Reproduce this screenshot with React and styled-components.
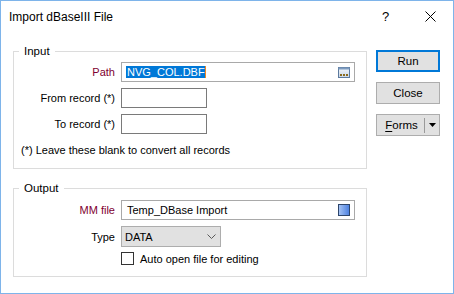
import styled, { createGlobalStyle } from "styled-components";

const GlobalStyle = createGlobalStyle`
  html, body {
    margin: 0;
    padding: 0;
    background: #fff;
  }
  body {
    font-family: "Liberation Sans", Arial, sans-serif;
    font-size: 11px;
    color: #000;
  }
`;

const Window = styled.div`
  box-sizing: border-box;
  width: 454px;
  height: 294px;
  border: 1px solid #7eb4ea;
  background: #fff;
  display: flex;
  flex-direction: column;
`;

const TitleBar = styled.div`
  height: 31px;
  display: flex;
  align-items: center;
  padding-left: 8px;
`;

const Title = styled.div`
  flex: 1;
  font-size: 12px;
  line-height: 16px;
`;

const CaptionButton = styled.div`
  width: 45px;
  height: 31px;
  display: flex;
  align-items: center;
  justify-content: center;
  font-size: 13px;
`;

const Body = styled.div`
  display: flex;
  gap: 9px;
  padding-left: 12px;
`;

const Groups = styled.div`
  width: 354px;
  padding-top: 19px;
  display: flex;
  flex-direction: column;
  gap: 19px;
`;

const Group = styled.div`
  position: relative;
  border: 1px solid #dcdcdc;
  padding: ${(p) => p.$pad};
`;

const GroupTitle = styled.span`
  position: absolute;
  top: -9px;
  left: 5px;
  padding: 0 5px;
  background: #fff;
  font-size: 11.5px;
  line-height: 16px;
`;

const Form = styled.div`
  display: grid;
  grid-template-columns: 101px auto;
  column-gap: 6px;
  row-gap: 6px;
  align-items: center;
  justify-items: start;
  margin-top: ${(p) => p.$top || 0}px;
`;

const Label = styled.label`
  justify-self: end;
  line-height: 16px;
  color: ${(p) => (p.$required ? "#800030" : "#000")};
`;

const Field = styled.div`
  box-sizing: border-box;
  width: ${(p) => p.$width}px;
  height: ${(p) => p.$height || 20}px;
  border: 1px solid ${(p) => (p.$combo ? "#adadad" : p.$light ? "#a9a9a9" : "#7a7a7a")};
  background: ${(p) => (p.$combo ? "#e1e1e1" : "#fff")};
  display: flex;
  align-items: center;
  padding: 0 4px 0 ${(p) => p.$padLeft || 5}px;
  line-height: 16px;
`;

const Value = styled.span`
  flex: 1;
  white-space: nowrap;
`;

const Selected = styled.span`
  background: #0078d7;
  color: #fff;
  line-height: 12px;
  padding: 0 0 0 1px;
  border-right: 1px solid #f08a24;
`;

const Note = styled.div`
  margin-top: 8px;
  padding-left: 7px;
  line-height: 16px;
`;

const CheckRow = styled.label`
  grid-column: 2;
  display: flex;
  align-items: center;
  gap: 6px;
  height: 13px;
`;

const CheckBox = styled.span`
  box-sizing: border-box;
  width: 13px;
  height: 13px;
  border: 1px solid #333;
  background: #fff;
`;

const Buttons = styled.div`
  padding-top: 18px;
  display: flex;
  flex-direction: column;
  gap: 10px;
`;

const Button = styled.button`
  box-sizing: border-box;
  width: 64px;
  height: 22px;
  padding: 0;
  font-family: inherit;
  font-size: 11.5px;
  color: #000;
  background: #e1e1e1;
  border: ${(p) => (p.$default ? "2px solid #0078d7" : "1px solid #adadad")};
  display: flex;
  align-items: center;
  justify-content: center;
`;

const SplitLabel = styled.span`
  width: 45px;
  text-align: center;
  padding-left: 2px;
`;

const SplitDivider = styled.span`
  width: 1px;
  height: 15px;
  background: #9a9a9a;
`;

const SplitArrow = styled.span`
  flex: 1;
  display: flex;
  justify-content: center;
`;

const Underline = styled.span`
  text-decoration: underline;
  text-underline-offset: 2px;
`;

const BrowseIcon = () => (
  <svg width="12" height="11" viewBox="0 0 12 11">
    <defs>
      <linearGradient id="bg" x1="0" y1="0" x2="0" y2="1">
        <stop offset="0" stopColor="#f4f7fb" />
        <stop offset="1" stopColor="#c9d6e6" />
      </linearGradient>
    </defs>
    <rect x="0.5" y="0.5" width="11" height="10" fill="url(#bg)" stroke="#5c7a9e" />
    <rect x="0.5" y="0.5" width="11" height="2" fill="#7d9bc0" />
    <rect x="2" y="7" width="2" height="2" fill="#8a6a1c" />
    <rect x="5" y="7" width="2" height="2" fill="#8a6a1c" />
    <rect x="8" y="7" width="2" height="2" fill="#8a6a1c" />
  </svg>
);

const FileIcon = () => (
  <svg width="12" height="12" viewBox="0 0 12 12">
    <defs>
      <linearGradient id="fg" x1="0" y1="0" x2="1" y2="0">
        <stop offset="0" stopColor="#a9c6f5" />
        <stop offset="1" stopColor="#4a7fe0" />
      </linearGradient>
    </defs>
    <rect x="0.5" y="0.5" width="11" height="11" fill="url(#fg)" stroke="#2e466b" />
  </svg>
);

const Chevron = () => (
  <svg width="9" height="5" viewBox="0 0 9 5">
    <path d="M0.5 0.5 L4.5 4.5 L8.5 0.5" fill="none" stroke="#5a5a5a" />
  </svg>
);

const DropArrow = () => (
  <svg width="7" height="4" viewBox="0 0 7 4">
    <path d="M0 0 H7 L3.5 4 Z" fill="#000" />
  </svg>
);

const CloseGlyph = () => (
  <svg width="11" height="11" viewBox="0 0 11 11">
    <path d="M0.5 0.5 L10.5 10.5 M10.5 0.5 L0.5 10.5" stroke="#000" strokeWidth="1" />
  </svg>
);

export default function App() {
  return (
    <>
      <GlobalStyle />
      <Window>
        <TitleBar>
          <Title>Import dBaseIII File</Title>
          <CaptionButton>?</CaptionButton>
          <CaptionButton>
            <CloseGlyph />
          </CaptionButton>
        </TitleBar>
        <Body>
          <Groups>
            <Group $pad="10px 11px 10px 0">
              <GroupTitle>Input</GroupTitle>
              <Form>
                <Label $required>Path</Label>
                <Field $width={234} $light $padLeft={4}>
                  <Value>
                    <Selected>NVG_COL.DBF</Selected>
                  </Value>
                  <BrowseIcon />
                </Field>
                <Label>From record (*)</Label>
                <Field $width={86} />
                <Label>To record (*)</Label>
                <Field $width={86} />
              </Form>
              <Note>(*) Leave these blank to convert all records</Note>
            </Group>
            <Group $pad="11px 11px 11px 0">
              <GroupTitle>Output</GroupTitle>
              <Form>
                <Label $required>MM file</Label>
                <Field $width={234} $light>
                  <Value>Temp_DBase Import</Value>
                  <FileIcon />
                </Field>
                <Label>Type</Label>
                <Field $width={100} $height={21} $combo $padLeft={3}>
                  <Value>DATA</Value>
                  <Chevron />
                </Field>
              </Form>
              <Form $top={5}>
                <span />
                <CheckRow>
                  <CheckBox />
                  Auto open file for editing
                </CheckRow>
              </Form>
            </Group>
          </Groups>
          <Buttons>
            <Button $default>Run</Button>
            <Button>Close</Button>
            <Button>
              <SplitLabel>
                <Underline>F</Underline>orms
              </SplitLabel>
              <SplitDivider />
              <SplitArrow>
                <DropArrow />
              </SplitArrow>
            </Button>
          </Buttons>
        </Body>
      </Window>
    </>
  );
}
